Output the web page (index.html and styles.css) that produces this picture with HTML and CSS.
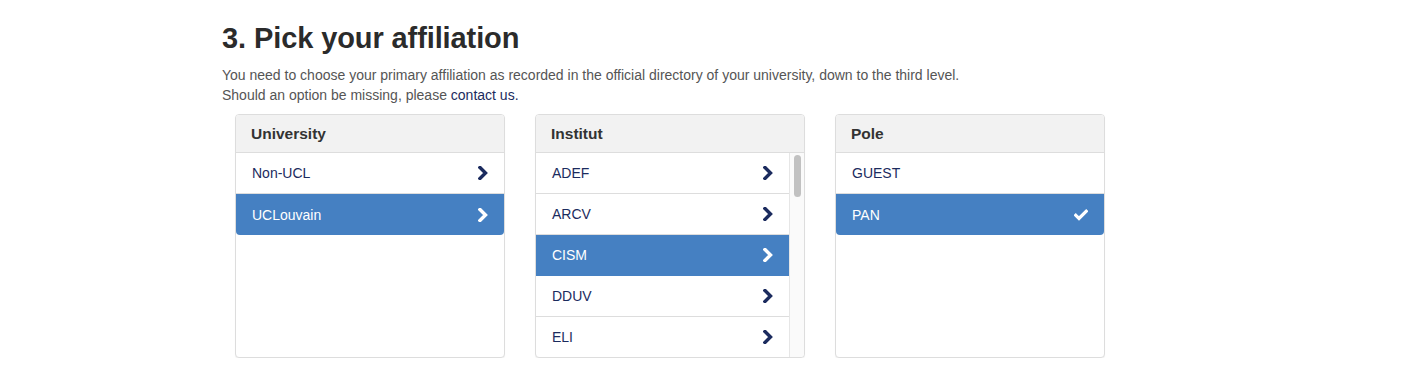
FILE: index.html
```html
<!DOCTYPE html>
<html lang="en">
<head>
    <meta charset="UTF-8">
    <title>Affiliation</title>
    <link rel="stylesheet" href="styles.css">
</head>
<body>
    <section class="step">
        <h3>3. Pick your affiliation</h3>
        <p class="help">
            You need to choose your primary affiliation as recorded in the official directory of your university, down to the third level.<br>
            Should an option be missing, please <a href="#">contact us.</a>
        </p>

        <div class="pickers">
            <div class="panel">
                <div class="panel-heading">University</div>
                <ul class="list-group">
                    <li class="item">Non-UCL<svg class="chev" viewBox="0 0 10 14"><path d="M2 1.5 L7.5 7 L2 12.5"/></svg></li>
                    <li class="item active">UCLouvain<svg class="chev" viewBox="0 0 10 14"><path d="M2 1.5 L7.5 7 L2 12.5"/></svg></li>
                </ul>
            </div>

            <div class="panel">
                <div class="panel-heading">Institut</div>
                <div class="list-wrap">
                    <ul class="list-group">
                        <li class="item">ADEF<svg class="chev" viewBox="0 0 10 14"><path d="M2 1.5 L7.5 7 L2 12.5"/></svg></li>
                        <li class="item">ARCV<svg class="chev" viewBox="0 0 10 14"><path d="M2 1.5 L7.5 7 L2 12.5"/></svg></li>
                        <li class="item active">CISM<svg class="chev" viewBox="0 0 10 14"><path d="M2 1.5 L7.5 7 L2 12.5"/></svg></li>
                        <li class="item">DDUV<svg class="chev" viewBox="0 0 10 14"><path d="M2 1.5 L7.5 7 L2 12.5"/></svg></li>
                        <li class="item">ELI<svg class="chev" viewBox="0 0 10 14"><path d="M2 1.5 L7.5 7 L2 12.5"/></svg></li>
                    </ul>
                    <div class="scrollbar"><div class="thumb"></div></div>
                </div>
            </div>

            <div class="panel">
                <div class="panel-heading">Pole</div>
                <ul class="list-group">
                    <li class="item">GUEST</li>
                    <li class="item active">PAN<svg class="check" viewBox="0 0 14 12"><path d="M1.8 6.3 L5 9.5 L12.2 2.3"/></svg></li>
                </ul>
            </div>
        </div>
    </section>
</body>
</html>
```

FILE: styles.css
```css
body {
    margin: 0;
    font-family: "Liberation Sans", Arial, Helvetica, sans-serif;
    font-size: 14px;
    color: #333;
    background: #fff;
}
.step {
    padding: 20px 0 0 222px;
}
.step h3 {
    margin: 0;
    font-size: 29px;
    font-weight: bold;
    line-height: 36px;
    letter-spacing: -0.1px;
    color: #2b2b2b;
}
.help {
    margin: 9px 0 0;
    font-size: 14px;
    line-height: 20px;
    color: #555;
    & a {
        color: #1b2b5e;
        text-decoration: none;
    }
}
.pickers {
    display: flex;
    gap: 30px;
    margin: 9px 0 0 13px;
}
.panel {
    width: 268px;
    border: 1px solid #ddd;
    border-radius: 4px;
    background: #fff;
    box-shadow: 0 1px 1px rgba(0, 0, 0, .05);
}
.panel-heading {
    height: 37px;
    padding: 0 15px;
    line-height: 38px;
    font-size: 15.5px;
    font-weight: bold;
    color: #333;
    background: #f2f2f2;
    border-bottom: 1px solid #ddd;
    border-radius: 3px 3px 0 0;
}
.list-group {
    list-style: none;
    margin: 0;
    padding: 0;
    height: 204px;
}
.item {
    display: flex;
    align-items: center;
    justify-content: space-between;
    height: 40px;
    padding: 0 16px;
    border-bottom: 1px solid #ddd;
    color: #1b2b5e;
    font-size: 14px;
    cursor: pointer;
    &:first-child {
        border-radius: 4px 4px 0 0;
    }
    &.active {
        background: #4580c2;
        border-bottom-color: #4580c2;
        color: #fff;
    }
}
.panel > .list-group .item:last-child {
    border-bottom: 0;
    height: 41px;
    border-radius: 0 0 4px 4px;
}
.list-wrap {
    display: flex;
    height: 204px;
    & .list-group {
        flex: 1;
        overflow: hidden;
        border-radius: 0 0 0 4px;
    }
}
.scrollbar {
    width: 15px;
    box-sizing: border-box;
    padding: 2px 3px 0 4px;
    background: #fafafa;
    border-left: 1px solid #e6e6e6;
    border-radius: 0 0 4px 0;
}
.thumb {
    height: 42px;
    border-radius: 4px;
    background: #c1c1c1;
}
.chev {
    width: 10px;
    height: 14px;
    & path {
        fill: none;
        stroke: currentColor;
        stroke-width: 3.4;
        stroke-linecap: square;
        stroke-linejoin: miter;
    }
}
.check {
    width: 14px;
    height: 12px;
    & path {
        fill: none;
        stroke: #fff;
        stroke-width: 3.2;
        stroke-linecap: square;
    }
}
```
